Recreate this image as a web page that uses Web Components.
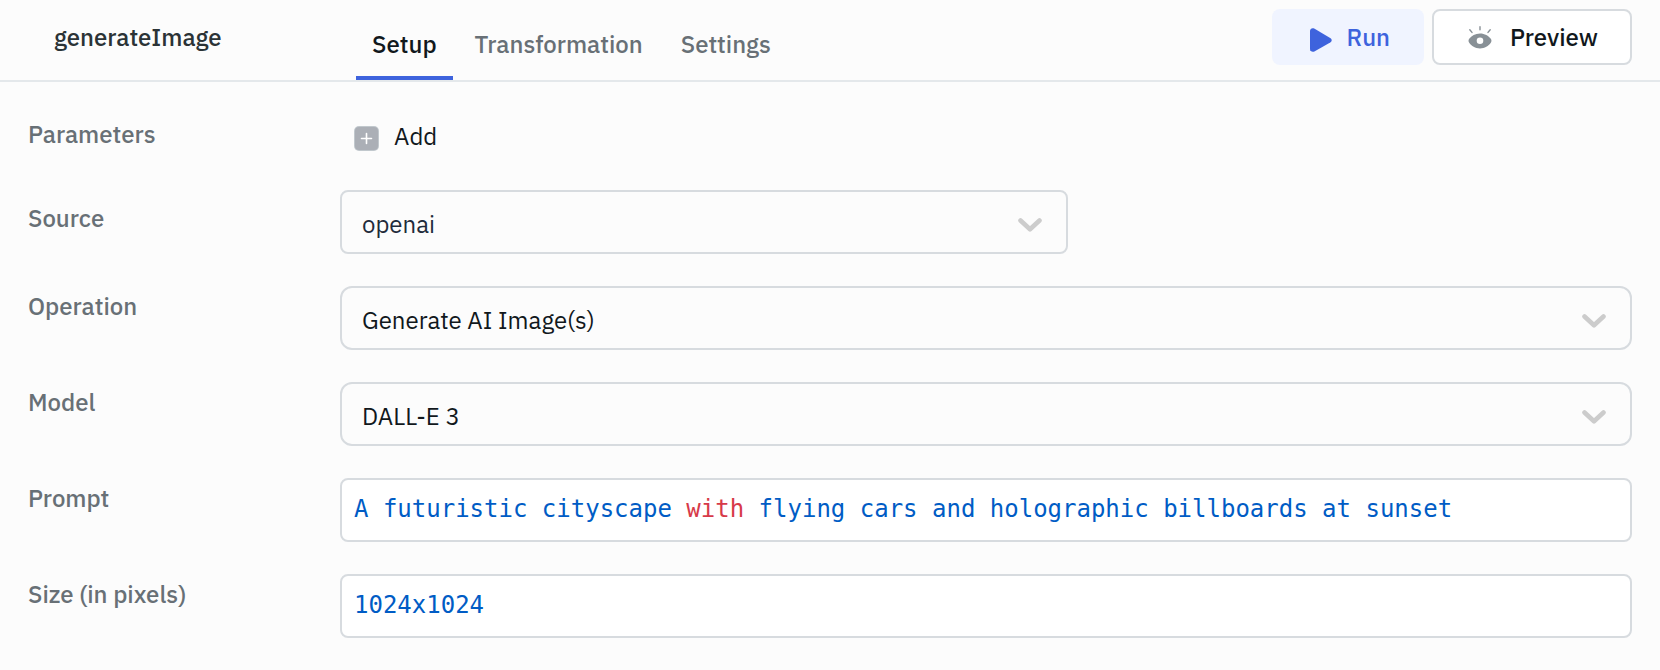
<!DOCTYPE html>
<html lang="en">
<head>
<meta charset="utf-8">
<meta name="viewport" content="width=device-width, initial-scale=1">
<title>generateImage</title>
<style>
  body {
    margin: 0;
    background: #fcfcfc;
    color: #11181c;
    font: 400 24px/32px "IBM Plex Sans", Roboto, sans-serif;
  }
</style>
</head>
<body>
<query-editor></query-editor>

<template id="query-editor">
  <style>
    :host { display: block; }
    main { display: grid; gap: 32px; padding: 32px 28px; }
    [slot="actions"] { flex: none; }
  </style>
  <query-header name="generateImage">
    <query-tabs slot="tabs" tabs="Setup,Transformation,Settings" active="Setup"></query-tabs>
    <action-button slot="actions" variant="primary">
      <svg slot="icon" width="24" height="30" viewBox="0 0 24 30" aria-hidden="true"><path d="M2 9C2 6.700 4.200 5.500 6.200 6.600L22.200 15.900C24.200 17.200 24.200 19.300 22.200 20.500L6.400 29.400C4.400 30.400 2 29.400 2 27Z" fill="#3e63dd"/></svg>
      Run
    </action-button>
    <action-button slot="actions" variant="outline">
      <svg slot="icon" width="24" height="24" viewBox="0 0 24 24" aria-hidden="true">
        <path fill="#889096" fill-rule="evenodd" d="M12 8.500C16.800 8.500 20.500 10.800 22.800 13.800C23.700 15 23.700 16.600 22.800 17.800C20.500 21 16.800 23.500 12 23.500C7.200 23.500 3.500 21 1.200 17.800C.3 16.600.3 15 1.200 13.800C3.500 10.800 7.200 8.500 12 8.500ZM12 12.500A3.300 3.300 0 1 0 12 19.100A3.300 3.300 0 1 0 12 12.500Z"/>
        <path fill="none" stroke="#889096" stroke-width="1.400" stroke-linecap="round" d="M12 1.800V4.800M1.800 4.800L4 7.400M22.200 4.800L20 7.400"/>
      </svg>
      Preview
    </action-button>
  </query-header>
  <main>
    <parameters-row></parameters-row>
    <select-field label="Source" value="openai" compact></select-field>
    <select-field label="Operation" value="Generate AI Image(s)"></select-field>
    <select-field label="Model" value="DALL-E 3"></select-field>
    <code-field label="Prompt" value="A futuristic cityscape with flying cars and holographic billboards at sunset"></code-field>
    <code-field label="Size (in pixels)" value="1024x1024"></code-field>
  </main>
</template>

<template id="query-header">
  <style>
    :host { display: block; border-bottom: 2px solid #e4e8eb; }
    header { display: flex; height: 80px; }
    h1 {
      box-sizing: border-box; flex: none; width: 340px; margin: 0; padding: 21px 16px 0 54px;
      font-size: 24px; font-weight: 500; line-height: 32px; color: #2b3336;
    }
    .tabs { display: flex; margin-left: 16px; }
    .actions { display: flex; align-items: flex-start; gap: 8px; margin-left: auto; padding: 9px 28px 0 16px; }
  </style>
  <header>
    <h1></h1>
    <div class="tabs"><slot name="tabs"></slot></div>
    <div class="actions"><slot name="actions"></slot></div>
  </header>
</template>

<template id="query-tabs">
  <style>
    :host { display: flex; }
    div { display: flex; gap: 6px; }
    button {
      padding: 28px 16px 16px; border: 0; border-bottom: 4px solid transparent; background: none;
      font: inherit; font-weight: 500; color: #687076; cursor: pointer;
    }
    button[aria-selected="true"] { color: #11181c; border-bottom-color: #3e63dd; }
  </style>
  <div role="tablist"></div>
</template>

<template id="action-button">
  <style>
    :host { display: block; }
    button {
      display: flex; align-items: center; height: 56px; box-sizing: border-box;
      border: 0; border-radius: 8px; font: inherit; font-weight: 500; white-space: nowrap; cursor: pointer;
    }
    :host([variant="primary"]) button { gap: 14px; padding: 0 34px 0 36px; background: #f0f4ff; color: #3e63dd; }
    :host([variant="outline"]) button {
      gap: 18px; padding: 0 32px 0 34px; border: 2px solid #d7dbdf; background: #fff; color: #11181c;
    }
    ::slotted(svg) { display: block; flex: none; }
  </style>
  <button type="button"><slot name="icon"></slot><span><slot></slot></span></button>
</template>

<template id="parameters-row">
  <style>
    :host { display: grid; grid-template-columns: 312px minmax(0, 1fr); }
    .label { padding-top: 4px; font-weight: 500; color: #687076; }
    button {
      display: flex; align-items: end; justify-self: start; gap: 15px; height: 44px; box-sizing: border-box;
      padding: 6px 14px; border: 0; background: none; font: inherit; color: #11181c; cursor: pointer;
    }
  </style>
  <span class="label" id="label">Parameters</span>
  <button type="button" aria-describedby="label">
    <svg width="25" height="26" viewBox="0 0 25 26" aria-hidden="true">
      <rect width="25" height="25" rx="5" fill="#c1c8cd"/>
      <rect x="1" y="1" width="23" height="23" rx="4" fill="#abafb6"/>
      <path d="M12.500 7.500V17.500M7.500 12.500H17.500" stroke="#fff" stroke-width="1.600" stroke-linecap="round"/>
    </svg>
    <span>Add</span>
  </button>
</template>

<template id="select-field">
  <style>
    :host { display: grid; grid-template-columns: 312px minmax(0, 1fr); --radius: 12px; }
    :host([compact]) { --radius: 8px; --text: #1f2b3b; }
    label { padding-top: 4px; font-weight: 500; color: #687076; }
    :host([compact]) label { padding-top: 12px; }
    .box { display: grid; align-items: center; }
    :host([compact]) .box { max-width: 728px; }
    select, svg { grid-area: 1 / 1; }
    select {
      appearance: none; box-sizing: border-box; width: 100%; height: 64px; margin: 0; padding: 4px 60px 0 20px;
      border: 2px solid #d7dbdf; border-radius: var(--radius); background: #fcfcfc;
      font: inherit; color: var(--text, #11181c);
    }
    svg { justify-self: end; margin: 6px 26px 0 0; pointer-events: none; }
  </style>
  <label for="control"></label>
  <div class="box">
    <select id="control"><option></option></select>
    <svg width="24" height="14" viewBox="0 0 24 14" aria-hidden="true"><path d="M2.500 2.500L12 11.300L21.500 2.500" fill="none" stroke="#ccc" stroke-width="4.600" stroke-linecap="round" stroke-linejoin="round"/></svg>
  </div>
</template>

<template id="code-field">
  <style>
    :host { display: grid; grid-template-columns: 312px minmax(0, 1fr); }
    label { padding-top: 4px; font-weight: 500; color: #687076; }
    .box {
      display: grid; box-sizing: border-box; height: 64px; border: 2px solid #d7dbdf; border-radius: 8px;
      background: #fff; font-family: "DejaVu Sans Mono", monospace; overflow: hidden;
    }
    input, .highlight {
      grid-area: 1 / 1; box-sizing: border-box; width: 100%; height: 60px; margin: 0; padding: 13px 12px 15px;
      border: 0; background: none; font: inherit; line-height: 32px; white-space: pre; overflow: hidden;
    }
    input { color: transparent; caret-color: #11181c; outline: none; }
    .highlight { color: #005cc5; pointer-events: none; }
    .keyword { color: #d73a49; }
  </style>
  <label for="control"></label>
  <div class="box">
    <input id="control" type="text" spellcheck="false" autocomplete="off">
    <div class="highlight" aria-hidden="true"></div>
  </div>
</template>

<script>
  class TemplateElement extends HTMLElement {
    constructor() {
      super();
      this.attachShadow({ mode: 'open' }).append(
        document.getElementById(this.localName).content.cloneNode(true));
    }
    find(selector) { return this.shadowRoot.querySelector(selector); }
  }

  class QueryHeader extends TemplateElement {
    connectedCallback() { this.find('h1').textContent = this.getAttribute('name'); }
  }

  class QueryTabs extends TemplateElement {
    connectedCallback() {
      const list = this.find('div');
      const tabs = this.getAttribute('tabs').split(',').map(name => {
        const tab = document.createElement('button');
        tab.type = 'button';
        tab.role = 'tab';
        tab.textContent = name;
        tab.ariaSelected = String(name === this.getAttribute('active'));
        tab.addEventListener('click', () => tabs.forEach(t => { t.ariaSelected = String(t === tab); }));
        return tab;
      });
      list.replaceChildren(...tabs);
    }
  }

  class SelectField extends TemplateElement {
    connectedCallback() {
      this.find('label').textContent = this.getAttribute('label');
      this.find('option').textContent = this.getAttribute('value');
    }
  }

  // A one-line code editor: the input holds the value, the layer above it colours the keywords.
  class CodeField extends TemplateElement {
    connectedCallback() {
      const input = this.find('input');
      const layer = this.find('.highlight');
      this.find('label').textContent = this.getAttribute('label');
      input.value = this.getAttribute('value');
      const paint = () => {
        layer.replaceChildren(...input.value.split(/\b(with|if|else|for|return)\b/).map((part, i) => {
          if (i % 2 === 0) return part;
          const word = document.createElement('span');
          word.className = 'keyword';
          word.textContent = part;
          return word;
        }));
        layer.scrollLeft = input.scrollLeft;
      };
      input.addEventListener('input', paint);
      input.addEventListener('scroll', () => { layer.scrollLeft = input.scrollLeft; });
      paint();
    }
  }

  customElements.define('query-header', QueryHeader);
  customElements.define('query-tabs', QueryTabs);
  customElements.define('action-button', class extends TemplateElement {});
  customElements.define('parameters-row', class extends TemplateElement {});
  customElements.define('select-field', SelectField);
  customElements.define('code-field', CodeField);
  customElements.define('query-editor', class extends TemplateElement {});
</script>
</body>
</html>
